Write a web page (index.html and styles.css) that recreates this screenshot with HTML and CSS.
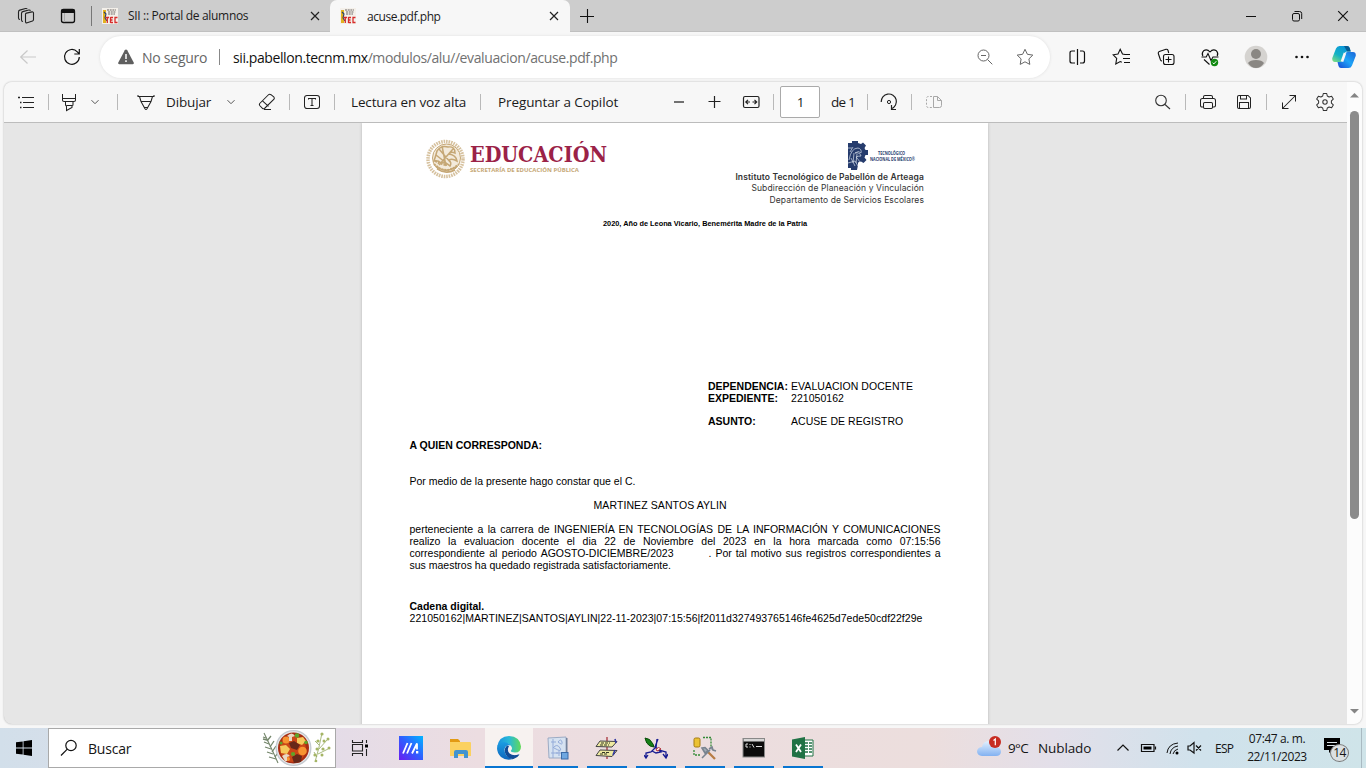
FILE: index.html
```html
<!DOCTYPE html>
<html lang="es">
<head>
<meta charset="utf-8">
<title>acuse.pdf.php</title>
<link rel="stylesheet" href="styles.css">
</head>
<body>
<svg width="0" height="0" class="defs">
  <defs>
    <symbol id="fav" viewBox="0 0 16 16"><rect width="16" height="16" fill="#f4f0ea"/><path d="M1 2h3v4l-1 2 1 3v4H1z" fill="#e3b21f"/><path d="M2 4l2 2-1 4 2 3" stroke="#27406b" stroke-width="1.1" fill="none"/><path d="M5 2h9M6 4h8M6 6h7" stroke="#6d6764" stroke-width="1.2" stroke-dasharray="2 .7"/><path d="M3.500 9.500h3.500M5.300 9.500v5.500M8.500 9.500h2.500M8.500 9v6M8.500 12h2M8.500 14.500h2.500M15.500 9.500h-2.500v5h2.500" stroke="#d72c2c" stroke-width="1.3" fill="none"/></symbol>
    <symbol id="x" viewBox="0 0 20 20"><path d="M6 6l8 8M14 6l-8 8" stroke="#222" stroke-width="1.2" fill="none"/></symbol>
    <symbol id="chev" viewBox="0 0 10 10"><path d="M1.500 3.2L5 6.700l3.500-3.500" stroke="#555" fill="none"/></symbol>
  </defs>
</svg>
<div class="tabs">
  <svg class="i m16" viewBox="0 0 20 20"><g stroke="#222" fill="none" stroke-width="1.1"><path d="M9.500 8.300q0-1 1-1.200l5.500-1.200q1.500-.2 1.500 1.200v6.400q0 1-1 1.400l-5.300 1.900q-1.700.4-1.700-1.200z"/><path d="M7 15.500q-1.500-.2-1.500-1.500V7.500q0-1.500 1.300-1.900l6-1.600q1.300-.2 1.700.7"/><path d="M4 13.500q-1.500-.2-1.500-1.500V6q0-1.500 1.300-1.900l5.700-1.600q1.300-.2 1.700.6"/></g></svg>
  <svg class="i m22" viewBox="0 0 20 20"><rect x="3.500" y="3.500" width="13" height="13" rx="2" fill="none" stroke="#111" stroke-width="1.3"/><path d="M3 7V5q0-2 2-2h10q2 0 2 2v2z" fill="#111"/><path d="M6.500 7v9" stroke="#aaa"/></svg>
  <i class="tabsep"></i>
  <svg class="fav m10"><use href="#fav"/></svg>
  <span class="ttl t1">SII :: Portal de alumnos</span>
  <svg class="i m57"><use href="#x"/></svg>
  <div class="active">
    <svg class="fav"><use href="#fav"/></svg>
    <span class="ttl t2">acuse.pdf.php</span>
    <svg class="i closer"><use href="#x"/></svg>
  </div>
  <svg class="i m7" viewBox="0 0 20 20"><path d="M3 10.500h14M10.500 3v14" stroke="#111" stroke-width="1.1"/></svg>
  <div class="winctl">
    <svg viewBox="0 0 20 20"><path d="M5 10.500h10" stroke="#111"/></svg>
    <svg viewBox="0 0 20 20"><rect x="5.500" y="7.500" width="7" height="7.500" rx="1.500" fill="none" stroke="#111"/><path d="M7.500 5.500h5q2.200 0 2.200 2v5.500" fill="none" stroke="#111"/></svg>
    <svg viewBox="0 0 20 20"><path d="M5.200 5.200l9.600 9.600M14.800 5.200l-9.600 9.600" stroke="#111" stroke-width="1.200"/></svg>
  </div>
</div>

<div class="nav">
  <svg class="i m18" viewBox="0 0 20 20"><path d="M18 10H3M9.500 3.500L2.700 10l6.800 6.500" stroke="#c9c9c9" fill="none" stroke-width="1.200"/></svg>
  <svg class="i m24" viewBox="0 0 20 20"><path d="M17.300 10a7.400 7.400 0 1 1-2-5.200L17 6.700M17.300 2v5h-5" stroke="#111" fill="none" stroke-width="1.200"/></svg>
  <div class="pill">
    <svg class="i m16" viewBox="0 0 20 20"><path d="M10 2.500q.8 0 1.200.7l6.500 12.300q.7 1.700-1 1.800H3.300q-1.700-.1-1-1.800L8.800 3.200q.4-.7 1.200-.7z" fill="#5f5f5f"/><path d="M10 7v5M10 13.300v1.700" stroke="#fff" stroke-width="1.500"/></svg>
    <span class="seg">No seguro</span>
    <i class="navsep"></i>
    <span class="url">sii.pabellon.tecnm.mx<span>/modulos/alu//evaluacion/acuse.pdf.php</span></span>
    <svg class="i zo" viewBox="0 0 20 20"><g stroke="#666" fill="none"><circle cx="8.500" cy="8.500" r="5.500"/><path d="M12.500 12.500l4.800 4.800M6 8.500h5"/></g></svg>
    <svg class="i m20" viewBox="0 0 20 20"><path d="M10 2.300l2.400 5 5.400.8-3.900 3.800.9 5.500-4.800-2.600-4.800 2.600.9-5.500-3.900-3.800 5.400-.8z" fill="none" stroke="#666"/></svg>
  </div>
  <svg class="i m17" viewBox="0 0 20 20"><path d="M8 4H5Q3 4 3 6v8q0 2 2 2h3M13 4h2.500q2 0 2 2v8q0 2-2 2H13M10.500 2v16" stroke="#111" fill="none" stroke-width="1.200"/></svg>
  <svg class="i m25" viewBox="0 0 20 20"><path d="M13 7.500L10.500 7 8.200 2.300 6 7l-4.800.8 3.500 3.600-.9 5.600 4.400-2.500 1.600.8M12 7.500h6M11 11.500h7M12 15.500h6" stroke="#111" fill="none" stroke-width="1.100"/></svg>
  <svg class="i m24" viewBox="0 0 20 20"><g stroke="#111" fill="none" stroke-width="1.100"><path d="M6 14q-1 0-1.500-1L2.300 6.500q-.3-1.500 1-2L10 2.300q1.500-.2 2 1L12.700 6"/><rect x="7.500" y="7.500" width="10.500" height="10" rx="2"/><path d="M12.500 9.500v6M9.500 12.500h6"/></g></svg>
  <svg class="i m24" viewBox="0 0 20 20"><path d="M2.800 9q-1.500-3 .8-5.200 3.500-2.200 6.400 1.200 2.900-3.400 6.400-1.200 2.300 2.200.8 5.200M1.500 10h4.700L8 6.500l3 7 2-3.500h5.500M4 12.500l5.500 5" stroke="#111" fill="none" stroke-width="1.100"/><circle cx="14.500" cy="15.500" r="3.700" fill="#128a12"/><path d="M12.700 15.700l1.200 1.200 2.400-2.700" stroke="#fff" fill="none"/></svg>
  <svg class="av" viewBox="0 0 24 24"><circle cx="12" cy="12" r="11.300" fill="#d5d3d0"/><circle cx="12" cy="9" r="5" fill="#8a8783"/><path d="M4 18q2-3 8-3t8 3q-3 5-8 5t-8-5z" fill="#8a8783"/></svg>
  <svg class="i m24" viewBox="0 0 20 20"><g fill="#111"><circle cx="4.500" cy="10" r="1.300"/><circle cx="10" cy="10" r="1.300"/><circle cx="15.500" cy="10" r="1.300"/></g></svg>
  <svg class="cop" viewBox="0 0 24 24"><defs><linearGradient id="ca" x1=".7" y1="0" x2="0" y2="1"><stop stop-color="#0a94dc"/><stop offset=".55" stop-color="#14b2c5"/><stop offset="1" stop-color="#8be27a"/></linearGradient><linearGradient id="cb" x1="1" y1="0" x2="0" y2="1"><stop stop-color="#1b65d8"/><stop offset=".5" stop-color="#1ea4f7"/><stop offset="1" stop-color="#1747d2"/></linearGradient></defs><path d="M7.500 1H15q2 0 2.700 2l1 3.500h-3.500q-2 0-2.700 2.300l-2 6.500q-.5 1.700-2 1.700H2.800q-3-.4-2.500-4L4 3.500Q5 1 7.500 1z" fill="url(#ca)"/><path d="M16.500 23H9q-2 0-2.500-2l-1-4h3q2 0 2.600-2l2.200-6.500Q14 7 15.500 7H21q3.300.3 2.700 4L20 20.500q-1 2.500-3.500 2.500z" fill="url(#cb)"/><path d="M12 1h3q2 0 2.700 2l1 3.500h-3.500z" fill="#075e94"/><path d="M13 8l-3 8.500" stroke="#f7f7f7" stroke-width="2.600"/></svg>
</div>

<div class="viewer">
  <div class="main">
    <div class="pdfbar">
      <svg class="i m12" viewBox="0 0 20 20"><path d="M6 5.500h12M7 10.500h11M7 15.500h11" stroke="#222" stroke-width="1.100"/><path d="M2 5.500h2M4 10.500h1.500M4 15.500h1.500" stroke="#222" stroke-width="1.700"/></svg>
      <i class="sep m12"></i>
      <svg class="i m10 fine" viewBox="0 0 20 20"><path d="M3.500 2v6q0 1.500 1.500 1.500h10q1.500 0 1.500-1.500V2M3.500 6.500h13M6.500 9.500v3q0 1.500 1 1.500v4.500l5.500-3V14q1 0 1-1.500v-3M7.500 13.500H13" stroke="#222" fill="none"/></svg>
      <svg class="c m11"><use href="#chev"/></svg>
      <i class="sep m17"></i>
      <svg class="i m18 fine" viewBox="0 0 20 20"><path d="M2 3v1.500h16V3M3.500 4.500L5 9.500l4 7.200q1 1.500 2 0l4-7.200 1.500-5M5 9.500h10M8 15.500h4" stroke="#222" fill="none"/></svg>
      <span class="txt m10 w45">Dibujar</span>
      <svg class="c m15"><use href="#chev"/></svg>
      <svg class="i m21 fine" viewBox="0 0 20 20"><path d="M11.200 3l-8.500 8.500q-.7 1 0 2l3 3q.8.600 1.800 0l9.500-9.300q.7-1 0-2L14 2.700q-1.500-1-2.800.3zM5.500 8.800l6 5.500M7 17.500h7" stroke="#222" fill="none"/></svg>
      <i class="sep m12"></i>
      <svg class="i m12 fine" viewBox="0 0 20 20"><rect x="2.500" y="3.500" width="15" height="13" rx="2.500" stroke="#222" fill="none"/><path d="M6.500 7.500v-1h7v1M10 6.500v7.500M8.500 13.500h3" stroke="#222" fill="none"/></svg>
      <i class="sep m12"></i>
      <span class="txt m16 w116">Lectura en voz alta</span>
      <i class="sep m13"></i>
      <span class="txt m17 w121">Preguntar a Copilot</span>
      <svg class="i m50" viewBox="0 0 20 20"><path d="M5 10h10" stroke="#444" stroke-width="1.500"/></svg>
      <svg class="i m15" viewBox="0 0 20 20"><path d="M4.500 9.500h12M10.500 4v12" stroke="#222" stroke-width="1.200"/></svg>
      <svg class="i m17" viewBox="0 0 20 20"><rect x="2.500" y="4.500" width="15.500" height="11" rx="1.500" stroke="#222" fill="none" stroke-width="1.200"/><path d="M9 10H4.800M7 7.800L4.800 10 7 12.200M11.500 10h4.200M13.500 7.800l2.200 2.200-2.200 2.200" stroke="#222" fill="none" stroke-width="1.200"/></svg>
      <i class="sep m12"></i>
      <span class="pg">1</span>
      <span class="txt m11 de">de 1</span>
      <i class="sep m13"></i>
      <svg class="i m11" viewBox="0 0 20 20"><path d="M2.200 10a7.600 7.600 0 1 1 10.300 6.700M12.500 13v4.500H17" stroke="#222" fill="none" stroke-width="1.200"/><circle cx="10" cy="10" r="1.600" stroke="#222" fill="none"/></svg>
      <i class="sep m12"></i>
      <svg class="i m12" viewBox="0 0 20 20"><path d="M9.500 4.500v11h6q2 0 2-2V8.500L13.500 4.500zM13.500 4.500v4h4" stroke="#a8a8a8" fill="none"/><path d="M8 4.500H4.500q-2 0-2 2v7q0 2 2 2H8" stroke="#a8a8a8" fill="none" stroke-dasharray="2 1.500"/></svg>
      <svg class="i find" viewBox="0 0 20 20"><circle cx="9" cy="8.500" r="5.300" stroke="#333" fill="none" stroke-width="1.100"/><path d="M13 12.500l5 4.500" stroke="#333" stroke-width="1.100"/></svg>
      <i class="sep m13"></i>
      <svg class="i m12 fine" viewBox="0 0 20 20"><g stroke="#222" fill="none"><path d="M5.500 6.500V5q0-1.500 1.500-1.500h6q1.500 0 1.500 1.500v1.500M5.500 15H4q-1.500 0-1.500-1.500v-5q0-2 2-2h11q2 0 2 2v5q0 1.500-1.500 1.500h-1.500"/><rect x="5.500" y="10.500" width="9" height="6" rx="1.200"/></g></svg>
      <svg class="i m16 fine" viewBox="0 0 20 20"><path d="M3.500 5q0-1.500 1.500-1.500h9L16.500 6v9q0 1.500-1.500 1.500H5q-1.500 0-1.500-1.500zM6.500 3.500V7h6V3.500M5.500 16.500v-6h9v6" stroke="#222" fill="none"/></svg>
      <i class="sep m12"></i>
      <svg class="i m12 fine" viewBox="0 0 20 20"><path d="M3.500 16.500l13-13M10.500 3.500h6v6M3.500 10.500v6h6" stroke="#222" fill="none"/></svg>
      <svg class="i m16 fine" viewBox="0 0 20 20"><path d="M8.300 1.500h3.400l.6 2.500 1.800 1 2.500-.8 1.700 2.900-1.900 1.800v2.200l1.900 1.800-1.700 2.900-2.500-.8-1.800 1-.6 2.500H8.300L7.700 16l-1.800-1-2.500.8-1.700-2.900 1.900-1.800V8.900L1.700 7.100l1.700-2.900 2.500.8 1.800-1z" stroke="#333" fill="none" stroke-linejoin="round"/><circle cx="10" cy="10" r="2.200" stroke="#333" fill="none"/></svg>
    </div>
    <div class="canvas">
      <div class="page">
        <div class="letterhead">
          <svg class="edu" width="190" height="60" viewBox="-1 -10 190 60">
            <g fill="none" stroke="#c5a775"><circle cx="18.500" cy="22" r="17.500" stroke-width="3.500" stroke-dasharray="1.600 .9" opacity=".7"/><circle cx="19.500" cy="21" r="14" fill="#f3eadb" stroke-width="1"/><path d="M10 14q4-6 11-4 7-1 7 6-4-2-6 1 7 1 8 7-5-3-8-1 3 3 1 6-4-4-9-3-3-3-7-2 2-6 3-10zM9 29q9 8 20 1M10 32q9 6 18 1M12 12l12 14M9 18l14 11M15 9l4 20M26 12l-14 16" stroke-width="1.500"/><path d="M7 27q12 12 25 0M8 24q7 4 12 4" stroke-width="2" stroke-dasharray="2 1"/></g>
            <text x="43" y="24.500" textLength="137" lengthAdjust="spacingAndGlyphs" class="educ">EDUCACIÓN</text>
            <text x="43" y="35" textLength="109" lengthAdjust="spacingAndGlyphs" class="sep-name">SECRETARÍA DE EDUCACIÓN PÚBLICA</text>
          </svg>
          <div class="inst">
            <svg width="77" height="31" viewBox="0 0 77 31">
              <path d="M1 2h4V0h6v2l3 1 2-1.500 3 3L17.500 7l1 2H21v5h-2.500l-1 2.500 2 2.500-3 3-2.500-1.500-3 1V24l-1 5H4v-2H1z" fill="#263c6d"/><path d="M2 19q2-12 9-12 4 1 3 5-2-3-6 0 5-1 6 3-3 0-5 1 2 2 4 5M1 22l7-2 3 5M4 17l4 8M7 12l-1 10M10 13l-1 9M1 7h4M3 11l3-5" stroke="#d6deea" fill="none" stroke-width=".7"/>
              <text x="31" y="14" textLength="27" lengthAdjust="spacingAndGlyphs" class="tec">TECNOLÓGICO</text><text x="23" y="19.500" textLength="45" lengthAdjust="spacingAndGlyphs" class="tec">NACIONAL DE MÉXICO®</text>
            </svg>
            <div class="mt b">Instituto Tecnológico de Pabellón de Arteaga</div>
            <div class="mt">Subdirección de Planeación y Vinculación</div>
            <div class="mt">Departamento de Servicios Escolares</div>
          </div>
        </div>
        <div class="motto">2020, Año de Leona Vicario, Benemérita Madre de la Patria</div>
        <div class="ref">
          <b>DEPENDENCIA:</b><span>EVALUACION DOCENTE</span>
          <b>EXPEDIENTE:</b><span>221050162</span>
          <b class="gap">ASUNTO:</b><span class="gap">ACUSE DE REGISTRO</span>
        </div>
        <div class="letter">
          <p class="p1"><b>A QUIEN CORRESPONDA:</b></p>
          <p class="p2">Por medio de la presente hago constar que el C.</p>
          <p class="p3">MARTINEZ SANTOS AYLIN</p>
          <div class="just">
            <div>perteneciente a la carrera de INGENIERÍA EN TECNOLOGÍAS DE LA INFORMACIÓN Y COMUNICACIONES</div>
            <div>realizo la evaluacion docente el dia 22 de Noviembre del 2023 en la hora marcada como 07:15:56</div>
            <div class="split"><span class="sa">correspondiente al periodo AGOSTO-DICIEMBRE/2023</span><span class="sb">. Por tal motivo sus registros correspondientes a</span></div>
          </div>
          <div class="last">sus maestros ha quedado registrada satisfactoriamente.</div>
          <p class="p4"><b>Cadena digital.</b></p>
          <div class="chain">221050162|MARTINEZ|SANTOS|AYLIN|22-11-2023|07:15:56|f2011d327493765146fe4625d7ede50cdf22f29e</div>
        </div>
      </div>
    </div>
  </div>
  <div class="scroll">
    <svg width="15" height="10" viewBox="0 0 15 10"><path d="M3 7.500L7.500 3 12 7.500z" fill="#858585"/></svg>
    <div class="thumb"></div>
    <svg class="down" width="15" height="10" viewBox="0 0 15 10"><path d="M3 3l4.500 4.500L12 3z" fill="#858585"/></svg>
  </div>
</div>

<div class="task">
  <div class="start"><svg width="16" height="16" viewBox="0 0 16 16"><path d="M0 2.300l6.700-.9v6.100H0zM7.500 1.300L16 0v7.500H7.500zM0 8.400h6.700v6.200L0 13.700zM7.500 8.400H16V16l-8.500-1.200z"/></svg></div>
  <div class="search">
    <svg class="m11" width="18" height="18" viewBox="0 0 18 18"><circle cx="11" cy="6.500" r="5.200" fill="none" stroke="#111" stroke-width="1.200"/><path d="M7.300 10.200L1 16.500" stroke="#111" stroke-width="1.200"/></svg>
    <span>Buscar</span>
    <svg class="soup" width="70" height="38" viewBox="0 0 70 38">
      <g fill="none" stroke="#74866b" stroke-width="1.100"><path d="M2 4q6 12 14 30"/><path d="M4 9L1 8M5 12l4-5M7 15l-5-2M8 18l4-6M9 20l-6-2M10 23l4-6M11 25l-6-2M13 28l4-6M14 30l-7-2M5 11l-4-1" stroke-width="1.300"/></g>
      <circle cx="31.500" cy="19" r="18" fill="#c3c9cf"/><circle cx="31.500" cy="19" r="16.700" fill="#e5e7e8"/><circle cx="31.500" cy="19" r="15.500" fill="#a92d12"/><circle cx="31" cy="20" r="13" fill="#cb4717"/>
      <g fill="#f79431"><circle cx="24" cy="11" r="3.500"/><circle cx="40.500" cy="22" r="4.300"/><circle cx="26" cy="30" r="2"/></g><path d="M18 17l6-1 4 4-3 5-6-1zM35 9l6-1 3 4-4 4-5-2z" fill="#f6c95c"/><path d="M27 14l5-2 6 4-3 5-6-2zM30 28l5-3 5 2-1 6-7 1z" fill="#672819"/><path d="M25 7q5-5 8 0l-3 1v4h-3V8zM20 27q5-4 8 0l-3 1v4h-2z" fill="#ead8c3"/><g fill="#5ea52a"><circle cx="35" cy="6.500" r="2.300"/><circle cx="31" cy="25" r="2.100"/><circle cx="44" cy="13.500" r="1.800"/><circle cx="19" cy="14" r="1.600"/></g>
      <g stroke="#92a75d" fill="none" stroke-width=".8"><path d="M53 33q4-13 7-29M57 20l8-9M56 25l10-5M57 16l-4-4M55 28l-3-5"/></g><g fill="#a5b565"><circle cx="60" cy="5" r="1.600"/><circle cx="56" cy="12" r="1.600"/><circle cx="62" cy="12" r="1.500"/><circle cx="66" cy="10" r="1.500"/><circle cx="55" cy="20" r="1.500"/><circle cx="61" cy="20" r="1.600"/><circle cx="67" cy="19" r="1.500"/><circle cx="53" cy="26" r="1.600"/><circle cx="60" cy="26" r="1.500"/><circle cx="54" cy="32" r="1.300"/></g>
    </svg>
  </div>
  <div class="app tv"><svg width="18" height="18" viewBox="0 0 18 18"><path d="M1.500 1v2.500h10V1M1.500 17v-2.500h10V17M1.500 5.500h10v6.500h-10zM15.500 1v3M15.500 10v7" fill="none" stroke="#222" stroke-width="1.100"/><path d="M14 5.500h3v3h-3z"/></svg></div>
  <div class="app"><svg width="24" height="24" viewBox="0 0 24 24"><defs><linearGradient id="my" x1="0" y1="1" x2="1" y2="0"><stop stop-color="#6a1cf0"/><stop offset=".5" stop-color="#315cff"/><stop offset="1" stop-color="#00b5ff"/></linearGradient></defs><rect width="24" height="24" fill="url(#my)"/><path d="M4 17.500L8.500 7M8 17.500L12.500 7M13 17.500L18 7.500v6" stroke="#fff" stroke-width="1.800" fill="none"/><path d="M17 15h2.300v2.500H17z" fill="#fff"/></svg></div>
  <div class="app"><svg width="24" height="24" viewBox="0 0 24 24"><path d="M2 3h8l2 2v4H2z" fill="#e29a13"/><path d="M2 6h20q1 0 1 1v13H2z" fill="#fbd160"/><path d="M6 22v-6q0-2 2-2h10q2 0 2 2v6h-4v-4h-6v4z" fill="#4394d0"/></svg></div>
  <div class="app on"><svg width="24" height="24" viewBox="0 0 24 24"><defs><linearGradient id="e1"><stop stop-color="#1a8fe0"/><stop offset=".5" stop-color="#28b9d8"/><stop offset="1" stop-color="#62da57"/></linearGradient><linearGradient id="e2" x2="0" y2="1"><stop stop-color="#1b9de2"/><stop offset="1" stop-color="#0f66bd"/></linearGradient></defs><path d="M0 11Q2 0 12 0q11 .5 12 10.500 0 6-6 6-5 0-4-2 2-2 0-4.500-3-4-8-2.500-4 1-6 3.500z" fill="url(#e1)"/><path d="M0 12q.5-6 7-6 5 .5 6.500 3.500-5-1-6 4 0 6 5.500 8.500 3 1.500 3 1Q9 25 4 21q-4-4-4-9z" fill="url(#e2)"/><path d="M10 9.500q-4 4-1 9 4 6 12 1 1-.7.500-1-5 2-9-1-3-3-.500-7.500z" fill="#114c97"/><path d="M8.500 18q3 5.500 8 5 4-1 6-4.500-1-.3-2 .5-6 2-9-2z" fill="#114c97"/></svg></div>
  <div class="app run"><svg width="24" height="24" viewBox="0 0 24 24"><path d="M2 2l18-1v21H3z" fill="#d6e2f1" stroke="#9cabc4"/><path d="M20 2h1.500v19L20 22z" fill="#73829b"/><path d="M5 6h5M7 3v19M5 17h7M12 6q3-4 4 0t-4 0M7 12q4-5 7 0t-6 0M10 17h6M13 14v6" stroke="#94abd9" fill="none"/><rect x="15.500" y="16.500" width="6.500" height="6.500" fill="#6fa7e0" stroke="#3b6ba8"/></svg></div>
  <div class="app run"><svg width="24" height="24" viewBox="0 0 24 24"><path d="M12 1v22" stroke="#b4545a" stroke-width="1.600"/><path d="M5 5l17 .5-5 5.500-16-.500zM5 14l17 .5-5 6-16-1z" fill="#eeeaa0" stroke="#444"/><path d="M6 7h9M5 9h9M7 16.500h8M5 18h8" stroke="#343926" stroke-dasharray="3 1"/><path d="M20 3l1 4M20 14l-2 5" stroke="#3239a4" stroke-width="1.600"/></svg></div>
  <div class="app run"><svg width="24" height="24" viewBox="0 0 24 24"><path d="M14 3l-3 8 7 4 4 1v5M12 11l-5 5-5 1v5M13 3l-1 9 5 4-5 1-4-2M0 19l2 3 2-3M19 18l3 4 2-4" stroke="#161b91" stroke-width="1.300" fill="none"/><path d="M1 2q5 0 8 6l1 3-4-1Q2 8 1 2z" fill="#168017" stroke="#0b4e0b"/><path d="M12 13q3-3 5 0l-4 2z" fill="#fff" stroke="#b12c33"/></svg></div>
  <div class="app run"><svg width="26" height="26" viewBox="0 0 26 26"><rect x="2" y="3" width="6" height="9" rx="1.500" fill="#ecc233" stroke="#a37a12"/><path d="M11 2.500h8v9M2 15v5h7" stroke="#338a36" stroke-width="1.300" fill="none" stroke-dasharray="2 1"/><path d="M15 16l8 8" stroke="#b77c45" stroke-width="2.300"/><path d="M10 23l8-8M10 13l3-.5 3 3-3 2.500zM17 14l3-2 1 3 3 1" stroke="#798390" stroke-width="1.600" fill="#a3adb6"/></svg></div>
  <div class="app run"><svg width="24" height="22" viewBox="0 0 24 22"><rect x="1" y="1.500" width="21.500" height="18.500" fill="#0c0c0c" stroke="#888"/><path d="M1.500 2h20.500v2.500H1.500z" fill="#d5d5d5"/><path d="M6 7H4v3h2M8 7v1M8 9.500v1M10 7l2 3.500M14 9.500h6" stroke="#ddd" fill="none"/></svg></div>
  <div class="app run"><svg width="24" height="24" viewBox="0 0 24 24"><path d="M11 4h11v16H11z" fill="#fff" stroke="#207245"/><path d="M14 7h3M18 7h3M14 10h3M18 10h3M14 13h3M18 13h3M14 16h3M18 16h3" stroke="#207245" stroke-width="1.700"/><path d="M1 3.500L14 1v22L1 20.500z" fill="#207245"/><path d="M5 8.500l5 7.500M10 8.500L5 16" stroke="#fff" stroke-width="1.800"/></svg></div>
  <svg class="cloud" width="26" height="26" viewBox="0 0 26 26"><defs><linearGradient id="cl" x2="0" y2="1"><stop stop-color="#e2f1ff"/><stop offset="1" stop-color="#82b1f1"/></linearGradient></defs><path d="M6 21q-5-.5-5-5 1-4 5-4 1-6 7-6 5 0 6 6 6 0 6 5-.5 4-5 4z" fill="url(#cl)"/><circle cx="19" cy="7" r="6" fill="#c72b21"/><path d="M17.500 5.500L19.300 4v6.300" stroke="#fff" stroke-width="1.200" fill="none"/></svg>
  <span class="tk wt">9°C</span><span class="tk nb">Nublado</span>
  <svg class="tray" width="104" height="20" viewBox="0 0 104 20"><g fill="none" stroke="#111" stroke-width="1.200"><path d="M7.500 12.500L13 7l5.500 5.500"/><path d="M31.500 6.500h12.500v7H31.500zM45.500 8.500v3"/><path d="M57 15q1-9 11-10M60 16q1-7 8-8M63 16q1-4 5-5" stroke-width="1"/><path d="M78 8v4h2l4 3V4.500L80 8zM86 7.500l5 5M91 7.500l-5 5"/></g><path d="M33.500 8.500h8v3h-8z"/><circle cx="67" cy="15" r="1.500"/></svg>
  <span class="tk esp">ESP</span>
  <div class="clock"><div class="c1">07:47 a. m.</div><div class="c2">22/11/2023</div></div>
  <div class="note"><svg width="16" height="16" viewBox="0 0 16 16"><path d="M0 0h16v12H8l-3 3v-3H0z"/><path d="M3 4.500h10M3 7.500h10" stroke="#dce5ea"/></svg><span>14</span></div>
  <i class="desk"></i>
</div>
</body>
</html>
```
FILE: styles.css
```css
* { box-sizing: border-box; }
body { margin: 0; width: 1366px; height: 768px; overflow: hidden; display: flex; flex-direction: column; background: #f7f7f7; font-family: "Open Sans", "Noto Sans", sans-serif; color: #1b1b1b; }
.defs { position: absolute; }
svg { flex: none; display: block; }
.i { width: 20px; height: 20px; }
.fine * { stroke-width: 1.05; }
.c { width: 10px; height: 10px; }
.fav { width: 16px; height: 16px; }
.m7 { margin-left: 7px; } .m10 { margin-left: 10px; } .m11 { margin-left: 11px; } .m12 { margin-left: 12px; }
.m13 { margin-left: 13px; } .m15 { margin-left: 15px; } .m16 { margin-left: 16px; } .m17 { margin-left: 17px; }
.m18 { margin-left: 18px; } .m20 { margin-left: 20px; } .m21 { margin-left: 21px; } .m22 { margin-left: 22px; }
.m24 { margin-left: 24px; } .m25 { margin-left: 25px; } .m50 { margin-left: 50px; } .m57 { margin-left: 57px; }

.tabs { height: 32px; flex: none; display: flex; align-items: center; background: #cdcdcd; border-bottom: 1px solid #c0c0c0; }
.tabsep { width: 1px; height: 20px; margin-left: 13px; background: #777; }
.ttl { font-size: 12px; white-space: nowrap; flex: none; }
.t1 { width: 120px; margin-left: 10px; letter-spacing: -.32px; }
.t2 { margin-left: 11px; width: 73px; letter-spacing: -.45px; }
.active { width: 240px; height: 32px; margin-left: 5px; margin-bottom: -1px; padding-left: 10px; display: flex; align-items: center; background: #f7f7f7; border-radius: 7px 7px 0 0; }
.closer { margin-left: 104px; }
.winctl { margin-left: auto; display: flex; }
.winctl svg { width: 46px; height: 20px; }

.nav { height: 50px; flex: none; display: flex; align-items: center; }
.pill { width: 950px; height: 42px; margin-left: 18px; border-radius: 21px; background: #fff; box-shadow: 0 0 3px #ddd; display: flex; align-items: center; font-size: 14px; white-space: nowrap; }
.seg { margin-left: 6px; width: 65px; flex: none; color: #666; letter-spacing: -.25px; }
.navsep { width: 1px; height: 16px; margin-left: 12px; background: #888; }
.url { margin-left: 13px; width: 384px; flex: none; letter-spacing: -.4px; color: #111; }
.url span { color: #717171; }
.zo { margin-left: 358px; }
.av { width: 24px; height: 24px; margin-left: 24px; }
.cop { width: 24px; height: 24px; margin-left: 20px; }

.viewer { width: 1358px; height: 642px; flex: none; margin-left: 4px; border-radius: 8px; overflow: hidden; display: flex; background: #e6e6e6; box-shadow: 0 0 2px #aaa; }
.main { width: 1343px; display: flex; flex-direction: column; }
.pdfbar { height: 41px; flex: none; display: flex; align-items: center; background: #f7f7f7; border-bottom: 1px solid #bcbcbc; }
.sep { width: 1px; height: 16px; flex: none; background: #b9b9b9; }
.txt { flex: none; white-space: nowrap; font-size: 13.500px; letter-spacing: -.15px; }
.w45 { width: 45px; } .w116 { width: 116px; } .w121 { width: 121px; letter-spacing: -.1px; }
.de { width: 23px; letter-spacing: -.8px; }
.pg { width: 40px; height: 32px; margin-left: 6px; flex: none; background: #fff; border: 1px solid #aaa; border-radius: 2px; font-size: 13.500px; line-height: 31px; text-align: center; padding-left: 1px; }
.find { margin-left: 208px; }
.canvas { flex: 1; overflow: hidden; padding-left: 358px; }
.page { width: 626px; height: 700px; background: #fff; box-shadow: 0 0 3px #b5b5b5; font: 10.500px/12px "Liberation Sans", Arial, sans-serif; color: #000; overflow: hidden; }

.letterhead { display: flex; justify-content: space-between; height: 96px; padding: 4px 64px 0; }
.educ { font: bold 22.500px "DejaVu Serif Condensed", "DejaVu Serif", serif; fill: #9b2247; }
.sep-name { font: bold 5.200px "Open Sans", sans-serif; fill: #c5a775; }
.inst { display: flex; flex-direction: column; align-items: flex-end; padding-top: 13.500px; }
.tec { font: bold 4.600px "Open Sans", sans-serif; fill: #263c6d; }
.mt { font: 8.500px/11.500px Inter, sans-serif; white-space: nowrap; color: #333; letter-spacing: .11px; }
.mt.b { font-weight: 600; }
.motto { margin-left: 241px; font-size: 7.350px; line-height: 10px; font-weight: bold; white-space: nowrap; }
.ref { display: grid; grid-template-columns: 83px 1fr; margin: 151px 0 0 346px; }
.ref span { letter-spacing: .05px; }
.gap { margin-top: 11px; }
.letter { margin-left: 47.500px; width: 531px; white-space: nowrap; }
.letter p { margin: 0; }
.p1 { padding-top: 12px; }
.letter .p2 { margin-top: 24px; }
.letter .p3 { margin: 12px 0 12px 184px; letter-spacing: .09px; }
.just div { text-align: justify; text-align-last: justify; white-space: normal; height: 12px; }
.just .split { display: flex; justify-content: space-between; white-space: nowrap; }
.sa { width: 264px; } .sb { width: 232px; }
.letter .p4 { margin-top: 29px; }
.chain { letter-spacing: .04px; }

.scroll { width: 15px; background: #fcfcfc; display: flex; flex-direction: column; align-items: center; padding: 8px 0; }
.thumb { width: 9px; height: 408px; margin-top: 11px; border-radius: 5px; background: #8b8b8b; }
.down { margin-top: auto; }

.task { height: 40px; flex: none; margin-top: 4px; display: flex; align-items: center; background: linear-gradient(90deg, #d2dfea 0, #e4dce8 24%, #ecdde1 35%, #ecdedd 68%, #e3dfe9 77%, #d0e2ec 88%, #cfe4e9 100%); color: #151515; }
.start { width: 48px; flex: none; display: flex; justify-content: center; }
.search { width: 288px; height: 40px; display: flex; align-items: center; border: 1px solid #a9a9a9; background: #fff; font-size: 14px; flex: none; }
.search span { margin-left: 10px; width: 43px; letter-spacing: -.2px; }
.soup { margin-left: 131px; }
.app { width: 48px; height: 40px; margin-right: 1px; flex: none; display: flex; align-items: center; justify-content: center; }
.app.tv { width: 50px; padding-right: 2px; }
.on { background: #f7f2f0; border-bottom: 2px solid #0875d1; padding-top: 2px; }
.run { background: linear-gradient(#0875d1, #0875d1) 4px 38px / 40px 2px no-repeat; }
.cloud { margin-left: 148px; }
.tk { font-size: 13.500px; white-space: nowrap; flex: none; }
.wt { margin-left: 6px; width: 22px; letter-spacing: -.6px; }
.nb { margin-left: 8px; width: 54px; letter-spacing: -.1px; }
.tray { margin-left: 18px; }
.esp { margin-left: 1px; width: 20px; font-size: 12px; letter-spacing: -.7px; }
.clock { margin-left: 12px; width: 60px; flex: none; font-size: 12px; line-height: 18px; text-align: center; white-space: nowrap; letter-spacing: -.4px; }
.note { width: 26px; height: 26px; margin-left: 17px; padding-top: 3px; position: relative; flex: none; }
.note span { position: absolute; left: 6px; top: 9px; width: 19px; height: 18px; border: 1px solid #777; border-radius: 50%; background: #dbe0e2; font-size: 12px; line-height: 16px; text-align: center; letter-spacing: -.5px; }
.desk { width: 1px; height: 40px; margin-left: 11px; background: #a9bac2; }
```
